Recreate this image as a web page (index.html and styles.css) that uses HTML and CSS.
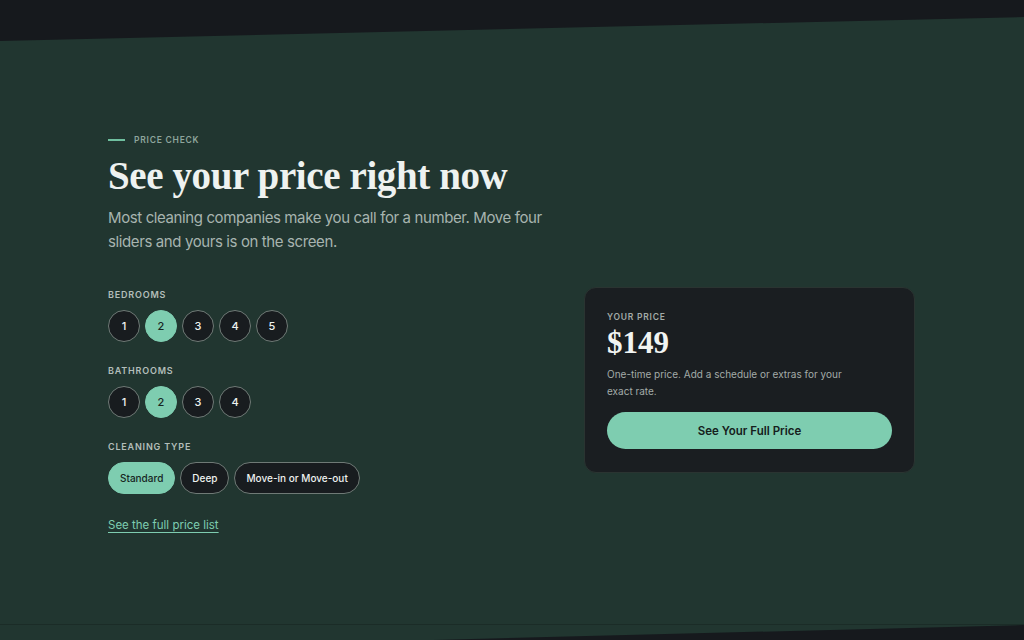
FILE: index.html
```html
<!DOCTYPE html>
<html lang="en">
<head>
<meta charset="utf-8">
<title>Price Check</title>
<link rel="stylesheet" href="styles.css">
</head>
<body>
<section class="band">
  <div class="wrap">
    <div class="eyebrow"><span class="eyebrow-line"></span>PRICE CHECK</div>
    <h1 class="title">See your price right now</h1>
    <p class="lead">Most cleaning companies make you call for a number. Move four sliders and yours is on the screen.</p>
    <div class="grid">
      <div class="controls">
        <div class="group">
          <div class="label">BEDROOMS</div>
          <div class="options">
            <button class="dot">1</button>
            <button class="dot active">2</button>
            <button class="dot">3</button>
            <button class="dot">4</button>
            <button class="dot">5</button>
          </div>
        </div>
        <div class="group">
          <div class="label">BATHROOMS</div>
          <div class="options">
            <button class="dot">1</button>
            <button class="dot active">2</button>
            <button class="dot">3</button>
            <button class="dot">4</button>
          </div>
        </div>
        <div class="group">
          <div class="label">CLEANING TYPE</div>
          <div class="options">
            <button class="pill active">Standard</button>
            <button class="pill">Deep</button>
            <button class="pill">Move-in or Move-out</button>
          </div>
        </div>
        <a class="link" href="#">See the full price list</a>
      </div>
      <div class="card">
        <div class="card-label">YOUR PRICE</div>
        <div class="price">$149</div>
        <p class="card-desc">One-time price. Add a schedule or extras for your exact rate.</p>
        <button class="cta">See Your Full Price</button>
      </div>
    </div>
  </div>
</section>
<section class="next">
  <div class="next-dark"></div>
</section>
</body>
</html>
```
FILE: styles.css
```css
* { box-sizing: border-box; }
html, body { margin: 0; padding: 0; }
body {
  background: #16191d;
  font-family: Inter, "Noto Sans", sans-serif;
  color: #eef2f0;
  overflow: hidden;
  height: 640px;
}
.band {
  margin-top: 17px;
  height: 608px;
  background: #213630;
  clip-path: polygon(0 24px, 100% 0, 100% 100%, 0 100%);
  border-bottom: 1px solid #1b2c27;
}
.wrap {
  margin: 0 109px 0 108px;
  padding-top: 117px;
}
.eyebrow {
  display: flex;
  align-items: center;
  gap: 9px;
  font-size: 8.5px;
  line-height: 12px;
  font-weight: 600;
  letter-spacing: 0.09em;
  color: #8ea59c;
}
.eyebrow-line {
  width: 17px;
  height: 2px;
  background: #6fbf9f;
}
.title {
  margin: 7px 0 0;
  font-family: "Liberation Serif", "DejaVu Serif", serif;
  font-weight: 700;
  font-size: 39px;
  line-height: 46px;
  letter-spacing: -0.01em;
  color: #eef2f0;
}
.lead {
  margin: 7px 0 0;
  max-width: 450px;
  font-size: 15px;
  line-height: 24px;
  letter-spacing: -0.026em;
  color: #a7b4af;
}
.grid {
  margin-top: 34px;
  display: grid;
  grid-template-columns: 1fr 331px;
  align-items: start;
}
.controls {
  display: flex;
  flex-direction: column;
  align-items: flex-start;
  gap: 22px;
}
.group {
  display: flex;
  flex-direction: column;
  gap: 8px;
}
.label {
  font-size: 9px;
  line-height: 14px;
  font-weight: 600;
  letter-spacing: 0.09em;
  color: #b3beba;
}
.options {
  display: flex;
  gap: 5px;
}
button {
  font-family: inherit;
  cursor: pointer;
}
.dot {
  width: 32px;
  height: 32px;
  border-radius: 50%;
  border: 1px solid #6f7a76;
  background: #181c1f;
  color: #eef2f0;
  font-size: 11px;
  font-weight: 500;
  padding: 0;
}
.pill {
  height: 32px;
  padding: 0 11px;
  border-radius: 16px;
  border: 1px solid #6f7a76;
  background: #181c1f;
  color: #eef2f0;
  font-size: 10px;
  font-weight: 500;
}
.dot.active, .pill.active {
  background: #7ecdb0;
  border-color: #7ecdb0;
  color: #17261f;
}
.link {
  font-size: 11.5px;
  line-height: 18px;
  color: #7ecdb0;
  text-decoration: underline;
  text-underline-offset: 3px;
}
.card {
  margin-top: -1px;
  background: #1a1e21;
  border: 1px solid #2a3431;
  border-radius: 12px;
  padding: 22px 22px 23px;
}
.card-label {
  font-size: 8.5px;
  line-height: 14px;
  font-weight: 600;
  letter-spacing: 0.09em;
  color: #a3aba8;
}
.price {
  margin-top: 1px;
  font-family: "Liberation Serif", "DejaVu Serif", serif;
  font-weight: 700;
  font-size: 31px;
  line-height: 36px;
  color: #f1f4f2;
}
.card-desc {
  margin: 5px 0 0;
  max-width: 250px;
  font-size: 10px;
  line-height: 17px;
  color: #a3aba8;
}
.cta {
  margin-top: 12px;
  width: 100%;
  height: 37px;
  border: none;
  border-radius: 19px;
  background: #7ecdb0;
  color: #15201c;
  font-size: 11.5px;
  font-weight: 600;
}
.next {
  height: 40px;
  background: #213630;
}
.next-dark {
  height: 100%;
  background: #16191d;
  clip-path: polygon(0 26px, 100% 0, 100% 100%, 0 100%);
}
```
